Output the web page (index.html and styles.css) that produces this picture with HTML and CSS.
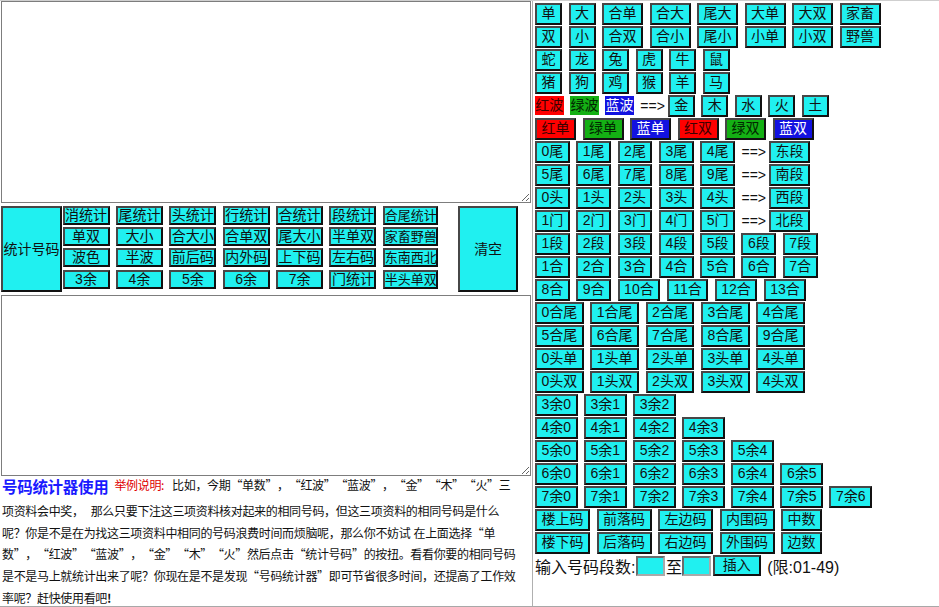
FILE: index.html
```html
<!DOCTYPE html>
<html lang="zh-CN">
<head>
<meta charset="utf-8">
<title>号码统计器</title>
<link rel="stylesheet" href="styles.css">
</head>
<body>
<div class="page">
  <div class="left">
    <textarea class="box box-top"></textarea>
    <div class="stat">
      <button class="btn big">统计号码</button>
      <div class="stat-grid">
        <button class="btn sg">消统计</button>
        <button class="btn sg">尾统计</button>
        <button class="btn sg">头统计</button>
        <button class="btn sg">行统计</button>
        <button class="btn sg">合统计</button>
        <button class="btn sg">段统计</button>
        <button class="btn sg wide">合尾统计</button>
        <button class="btn sg">单双</button>
        <button class="btn sg">大小</button>
        <button class="btn sg">合大小</button>
        <button class="btn sg">合单双</button>
        <button class="btn sg">尾大小</button>
        <button class="btn sg">半单双</button>
        <button class="btn sg wide">家畜野兽</button>
        <button class="btn sg">波色</button>
        <button class="btn sg">半波</button>
        <button class="btn sg">前后码</button>
        <button class="btn sg">内外码</button>
        <button class="btn sg">上下码</button>
        <button class="btn sg">左右码</button>
        <button class="btn sg wide">东南西北</button>
        <button class="btn sg">3余</button>
        <button class="btn sg">4余</button>
        <button class="btn sg">5余</button>
        <button class="btn sg">6余</button>
        <button class="btn sg">7余</button>
        <button class="btn sg">门统计</button>
        <button class="btn sg wide">半头单双</button>
      </div>
      <button class="btn big clear">清空</button>
    </div>
    <textarea class="box box-bottom"></textarea>
    <p class="help"><span class="title">号码统计器使用</span><span class="eg">举例说明:</span>比如，今期<span class="lq">“</span>单数<span class="rq">”</span>，<span class="lq">“</span>红波<span class="rq">”</span><span class="lq">“</span>蓝波<span class="rq">”</span>，<span class="lq">“</span>金<span class="rq">”</span><span class="lq">“</span>木<span class="rq">”</span><span class="lq">“</span>火<span class="rq">”</span>三<br>项资料会中奖，<span class="gap"></span>那么只要下注这三项资料核对起来的相同号码，但这三项资料的相同号码是什么<br>呢？你是不是在为找这三项资料中相同的号码浪费时间而烦脑呢，那么你不妨试<span class="sp"></span>在上面选择<span class="lq">“</span>单<br>数<span class="rq">”</span>，<span class="lq">“</span>红波<span class="rq">”</span><span class="lq">“</span>蓝波<span class="rq">”</span>，<span class="lq">“</span>金<span class="rq">”</span><span class="lq">“</span>木<span class="rq">”</span><span class="lq">“</span>火<span class="rq">”</span>然后点击<span class="lq">“</span>统计号码<span class="rq">”</span>的按扭。看看你要的相同号码<br>是不是马上就统计出来了呢？你现在是不是发现<span class="lq">“</span>号码统计器<span class="rq">”</span>即可节省很多时间，还提高了工作效<br>率呢？赶快使用看吧<span class="plain">!</span></p>
  </div>
  <div class="right">
    <div class="row"><button class="btn">单</button><button class="btn">大</button><button class="btn">合单</button><button class="btn">合大</button><button class="btn">尾大</button><button class="btn">大单</button><button class="btn">大双</button><button class="btn">家畜</button></div>
    <div class="row"><button class="btn">双</button><button class="btn">小</button><button class="btn">合双</button><button class="btn">合小</button><button class="btn">尾小</button><button class="btn">小单</button><button class="btn">小双</button><button class="btn">野兽</button></div>
    <div class="row"><button class="btn">蛇</button><button class="btn">龙</button><button class="btn">兔</button><button class="btn">虎</button><button class="btn">牛</button><button class="btn">鼠</button></div>
    <div class="row"><button class="btn">猪</button><button class="btn">狗</button><button class="btn">鸡</button><button class="btn">猴</button><button class="btn">羊</button><button class="btn">马</button></div>
    <div class="row"><span class="tag red">红波</span><span class="tag green">绿波</span><span class="tag blue">蓝波</span><span class="arrow">==&gt;</span><button class="btn">金</button><button class="btn">木</button><button class="btn">水</button><button class="btn">火</button><button class="btn">土</button></div>
    <div class="row"><button class="btn red">红单</button><button class="btn green">绿单</button><button class="btn blue">蓝单</button><button class="btn red">红双</button><button class="btn green">绿双</button><button class="btn blue">蓝双</button></div>
    <div class="row"><button class="btn">0尾</button><button class="btn">1尾</button><button class="btn">2尾</button><button class="btn">3尾</button><button class="btn">4尾</button><span class="arrow">==&gt;</span><button class="btn">东段</button></div>
    <div class="row"><button class="btn">5尾</button><button class="btn">6尾</button><button class="btn">7尾</button><button class="btn">8尾</button><button class="btn">9尾</button><span class="arrow">==&gt;</span><button class="btn">南段</button></div>
    <div class="row"><button class="btn">0头</button><button class="btn">1头</button><button class="btn">2头</button><button class="btn">3头</button><button class="btn">4头</button><span class="arrow">==&gt;</span><button class="btn">西段</button></div>
    <div class="row"><button class="btn">1门</button><button class="btn">2门</button><button class="btn">3门</button><button class="btn">4门</button><button class="btn">5门</button><span class="arrow">==&gt;</span><button class="btn">北段</button></div>
    <div class="row"><button class="btn">1段</button><button class="btn">2段</button><button class="btn">3段</button><button class="btn">4段</button><button class="btn">5段</button><button class="btn">6段</button><button class="btn">7段</button></div>
    <div class="row"><button class="btn">1合</button><button class="btn">2合</button><button class="btn">3合</button><button class="btn">4合</button><button class="btn">5合</button><button class="btn">6合</button><button class="btn">7合</button></div>
    <div class="row"><button class="btn">8合</button><button class="btn">9合</button><button class="btn">10合</button><button class="btn">11合</button><button class="btn">12合</button><button class="btn">13合</button></div>
    <div class="row"><button class="btn">0合尾</button><button class="btn">1合尾</button><button class="btn">2合尾</button><button class="btn">3合尾</button><button class="btn">4合尾</button></div>
    <div class="row"><button class="btn">5合尾</button><button class="btn">6合尾</button><button class="btn">7合尾</button><button class="btn">8合尾</button><button class="btn">9合尾</button></div>
    <div class="row"><button class="btn">0头单</button><button class="btn">1头单</button><button class="btn">2头单</button><button class="btn">3头单</button><button class="btn">4头单</button></div>
    <div class="row"><button class="btn">0头双</button><button class="btn">1头双</button><button class="btn">2头双</button><button class="btn">3头双</button><button class="btn">4头双</button></div>
    <div class="row"><button class="btn">3余0</button><button class="btn">3余1</button><button class="btn">3余2</button></div>
    <div class="row"><button class="btn">4余0</button><button class="btn">4余1</button><button class="btn">4余2</button><button class="btn">4余3</button></div>
    <div class="row"><button class="btn">5余0</button><button class="btn">5余1</button><button class="btn">5余2</button><button class="btn">5余3</button><button class="btn">5余4</button></div>
    <div class="row"><button class="btn">6余0</button><button class="btn">6余1</button><button class="btn">6余2</button><button class="btn">6余3</button><button class="btn">6余4</button><button class="btn">6余5</button></div>
    <div class="row"><button class="btn">7余0</button><button class="btn">7余1</button><button class="btn">7余2</button><button class="btn">7余3</button><button class="btn">7余4</button><button class="btn">7余5</button><button class="btn">7余6</button></div>
    <div class="row"><button class="btn">楼上码</button><button class="btn">前落码</button><button class="btn">左边码</button><button class="btn">内围码</button><button class="btn">中数</button></div>
    <div class="row"><button class="btn">楼下码</button><button class="btn">后落码</button><button class="btn">右边码</button><button class="btn">外围码</button><button class="btn">边数</button></div>
    <div class="input-row">
      <span>输入号码段数:</span><input class="num" type="text"><span class="to">至</span><input class="num" type="text"><button class="btn insert">插入</button><span class="limit">(限:01-49)</span>
    </div>
  </div>
</div>
</body>
</html>
```

FILE: styles.css
```css
html, body {
  margin: 0;
  padding: 0;
  overflow: hidden;
  background: #fff;
}

body {
  font-family: "Liberation Sans", "Noto Sans CJK SC", sans-serif;
  color: #111;
}

.page {
  display: flex;
  height: 607px;
  box-sizing: border-box;
  border-top: 1px solid #cfcfcf;
  border-bottom: 1px solid #a8a8a8;
}

.left {
  width: 532px;
  flex: none;
  border-right: 1px solid #b0b0b0;
  display: flex;
  flex-direction: column;
}

.right {
  flex: 1;
  padding: 2px 0 0 2px;
}

/* textareas */
.box {
  display: block;
  box-sizing: border-box;
  width: 530px;
  margin: 0 0 0 1px;
  border: 1px solid #7d7d7d;
  padding: 2px;
  font: 13px "Noto Sans CJK SC", sans-serif;
  background: #fff;
  flex: none;
}

.box-top {
  height: 202px;
}

.box-bottom {
  height: 181px;
  margin-top: 3px;
}

/* buttons */
.btn {
  box-sizing: border-box;
  background: #20f0f0;
  border: 2px solid;
  border-color: #474747 #111 #111 #474747;
  color: #111;
  font: 14px/17px "Liberation Sans", "Noto Sans CJK SC", sans-serif;
  padding: 0 4.5px;
  margin: 0;
  white-space: nowrap;
  flex: none;
}

/* statistics block */
.stat {
  display: flex;
  align-items: flex-start;
  margin-top: 3px;
  height: 86px;
  padding-left: 1px;
  flex: none;
}

.big {
  width: 61px;
  height: 86px;
  padding: 0;
}

.clear {
  width: 60px;
  margin-left: 19.7px;
}

.stat-grid {
  display: grid;
  grid-template-columns: repeat(6, 47px) 55.6px;
  grid-template-rows: repeat(4, 19px);
  column-gap: 6.4px;
  row-gap: 2.2px;
  margin-left: 0.5px;
}

.sg {
  width: 100%;
  height: 19px;
  padding: 0;
  line-height: 15px;
}

.sg.wide {
  font-size: 13px;
}

/* help text */
.help {
  margin: -2px 0 0 0;
  padding-left: 2px;
  font: 12px/21.7px "Noto Sans CJK SC", sans-serif;
  letter-spacing: -0.33px;
  white-space: nowrap;
  color: #111;
}

.title {
  font-size: 15.5px;
  font-weight: bold;
  color: #1a1aff;
  letter-spacing: -0.3px;
  line-height: 25.8px;
  vertical-align: top;
  margin-right: 6px;
}

.eg {
  color: #e00000;
  margin-right: 8px;
}

.lq,
.rq {
  display: inline-block;
  width: 11.67px;
  letter-spacing: 0;
}

.lq {
  text-align: right;
}

.rq {
  text-align: left;
}

.gap {
  display: inline-block;
  width: 7px;
}

.sp {
  display: inline-block;
  width: 3px;
}

.plain {
  font-weight: bold;
}

/* right column rows */
.row {
  display: flex;
  align-items: center;
  gap: 6.5px;
  height: 21.5px;
  margin-bottom: 1.5px;
}

.row .btn {
  height: 21.5px;
}

.red {
  background: #ff0000;
  color: #3a0000;
}

.green {
  background: #14b014;
  color: #012801;
}

.blue {
  background: #1212e0;
  color: #fff;
}

.tag {
  height: 19px;
  font: 14px/19px "Liberation Sans", "Noto Sans CJK SC", sans-serif;
  padding: 0 0.3px;
}

.arrow {
  font-size: 14px;
  margin-right: -3.5px;
}

/* input row */
.input-row {
  display: flex;
  align-items: center;
  height: 21px;
  font-size: 16px;
}

.num {
  width: 29px;
  height: 20px;
  box-sizing: border-box;
  background: #20f0f0;
  border: 2px solid;
  border-color: #6c6c6c #a9a9a9 #a9a9a9 #6c6c6c;
  padding: 0;
  margin: 0 0 0 0.5px;
}

.to {
  margin-left: 1px;
}

.insert {
  height: 21px;
  padding: 0 8px;
  margin-left: 1.3px;
}

.limit {
  margin-left: 6.5px;
}
```
